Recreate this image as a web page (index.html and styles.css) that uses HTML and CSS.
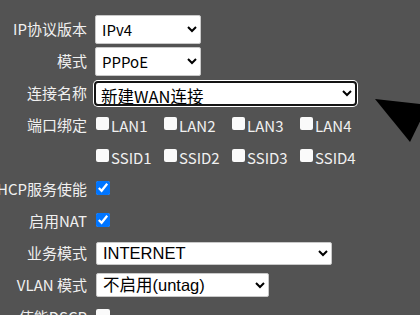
FILE: index.html
```html
<!DOCTYPE html>
<html>
<head>
  <title>WAN 连接</title>
<link rel="stylesheet" href="styles.css">
</head>
<body>
  <div class="form">
    <div class="label">IP协议版本</div>
    <div class="field"><select class="sel sel-ver"><option>IPv4</option><option>IPv6</option></select></div>

    <div class="label">模式</div>
    <div class="field"><select class="sel sel-ver"><option>PPPoE</option><option>DHCP</option></select></div>

    <div class="label">连接名称</div>
    <div class="field"><select class="sel sel-name"><option>新建WAN连接</option></select></div>

    <div class="label">端口绑定</div>
    <div class="field checks">
      <label class="chk"><input type="checkbox">LAN1</label>
      <label class="chk"><input type="checkbox">LAN2</label>
      <label class="chk"><input type="checkbox">LAN3</label>
      <label class="chk"><input type="checkbox">LAN4</label>
    </div>

    <div class="label"></div>
    <div class="field checks">
      <label class="chk"><input type="checkbox">SSID1</label>
      <label class="chk"><input type="checkbox">SSID2</label>
      <label class="chk"><input type="checkbox">SSID3</label>
      <label class="chk"><input type="checkbox">SSID4</label>
    </div>

    <div class="label">DHCP服务使能</div>
    <div class="field"><input class="single" type="checkbox" checked></div>

    <div class="label">启用NAT</div>
    <div class="field"><input class="single" type="checkbox" checked></div>

    <div class="label">业务模式</div>
    <div class="field"><select class="sel sel-arial sel-service"><option>INTERNET</option><option>TR069</option></select></div>

    <div class="label">VLAN 模式</div>
    <div class="field"><select class="sel sel-arial sel-vlan"><option>不启用(untag)</option><option>启用(tag)</option></select></div>

    <div class="label">使能DSCP</div>
    <div class="field"><input class="single" type="checkbox"></div>
  </div>

  <svg class="pointer" width="60" height="50" viewBox="0 0 60 50">
    <polygon points="5,4 58,10 40,47" fill="#000"/>
  </svg>
</body>
</html>
```

FILE: styles.css
```css
html, body {
  overflow: hidden;
}

body {
  margin: 0;
  padding-top: 13px;
  background: #535353;
  color: #f0f0f0;
  font-family: "Noto Sans CJK SC", sans-serif;
  font-size: 15px;
  position: relative;
  height: 302px;
}

.form {
  display: grid;
  grid-template-columns: 87px 1fr;
  grid-auto-rows: 32px;
  column-gap: 8px;
  align-items: center;
}

.label {
  display: flex;
  justify-content: flex-end;
  white-space: nowrap;
  line-height: 20px;
}

.field {
  display: flex;
  align-items: center;
}

.sel {
  font-family: "Noto Sans CJK SC", sans-serif;
  font-size: 15px;
  color: #000;
  background: #fff;
  border: 1px solid #c9c9c9;
  border-radius: 2px;
  padding: 0 2px;
}

.sel-ver {
  width: 106px;
  height: 29px;
}

.sel-name {
  width: 263px;
  height: 25px;
  margin-left: -1px;
  font-size: 16.5px;
  border: 2px solid #141414;
  border-radius: 4px;
  box-shadow: 0 0 0 1px #fff;
  padding: 0 1px;
  line-height: 20px;
}

.sel-arial {
  font-family: "Liberation Sans", "Noto Sans CJK SC", sans-serif;
  font-size: 16.5px;
  margin-left: 1px;
}

.sel-service {
  width: 236px;
  height: 23px;
}

.sel-vlan {
  width: 173px;
  height: 24px;
}

.checks {
  display: grid;
  grid-template-columns: repeat(4, 68px);
}

.chk {
  display: flex;
  align-items: center;
  white-space: nowrap;
}

.chk input,
.single {
  width: 13px;
  height: 13px;
  margin: 0 2px 3px 1px;
}

.single {
  width: 14px;
  height: 14px;
}

/* unchecked boxes show as plain white squares */
input[type="checkbox"]:not(:checked) {
  appearance: none;
  background: #fafafa;
  border: none;
  border-radius: 2px;
}

.pointer {
  position: absolute;
  left: 370px;
  top: 95px;
}
```
